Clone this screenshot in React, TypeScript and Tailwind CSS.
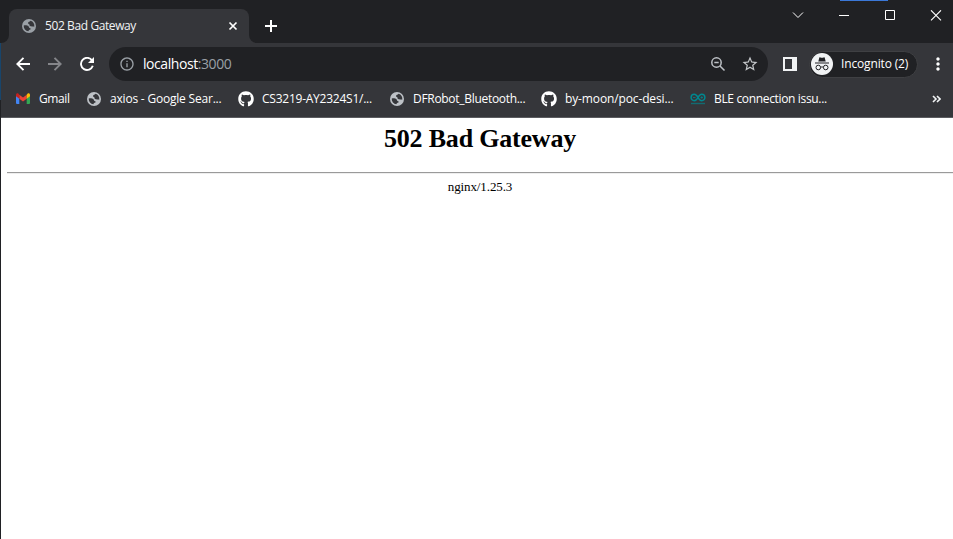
import React from "react";
import { MdInfoOutline, MdStarBorder, MdMoreVert } from "react-icons/md";
import { FaGithub } from "react-icons/fa";

const Globe = ({ className }: { className: string }) => (
  <svg viewBox="0 0 16 16" className={className}>
    <circle cx="8" cy="8" r="8" fill="currentColor" />
    <path d="M9.800 2.100C9.300 3.300 7.200 3 6.900 4.500c-.2 1 .9 1.100 1.400 1.600.5.600.1 1.500.8 2 1.200.8 3.800.1 4.900.7C14.600 5.600 12.800 3 9.800 2.100Z" fill="#35363a" />
    <path d="M2 7.400c1.800-.5 4.300-.2 5.400.8.700.6.500 1.600 1.300 2 .7.400 1.500.4 1.300 1.300-.3 1.200-2.300.6-2.700 2.400C4.200 13.700 1.800 10.900 2 7.400Z" fill="#35363a" />
  </svg>
);

const Gmail = () => (
  <svg viewBox="0 0 14 11" className="h-[11px] w-[14px] shrink-0">
    <path d="M0 2v8a1 1 0 0 0 1 1h2.300V4.500Z" fill="#4285f4" />
    <path d="M14 2v8a1 1 0 0 1-1 1h-2.300V4.500Z" fill="#34a853" />
    <path d="M3.300 1.700v4L7 8.500l3.700-2.800v-4L7 4.500Z" fill="#ea4335" />
    <path d="M0 2v1.300l3.300 2.400v-4L2.300.5C1.300-.2 0 .5 0 2Z" fill="#c5221f" />
    <path d="M14 2v1.300l-3.300 2.400v-4l1-1.200C12.700-.2 14 .5 14 2Z" fill="#fbbc04" />
  </svg>
);

const Arduino = () => (
  <svg viewBox="0 0 16 12" className="h-3 w-4 shrink-0" fill="none" stroke="#00878f">
    <path d="M8 4.500C6.900 2.400 5.700 1.300 4.300 1.300a3.200 3.200 0 0 0 0 6.400c1.400 0 2.600-1.100 3.700-3.200 1.100-2.100 2.300-3.200 3.700-3.200a3.200 3.200 0 0 1 0 6.400c-1.400 0-2.600-1.100-3.700-3.200Z" strokeWidth="1.500" />
    <path d="M3 4.500h2.500M10.500 4.500H13M11.750 3.250v2.500" strokeWidth=".8" />
    <path d="M1 10.500h14" strokeOpacity=".65" strokeWidth="1.400" />
  </svg>
);

const Incognito = () => (
  <svg viewBox="0 0 22 22" className="size-[22px] shrink-0">
    <circle cx="11" cy="11" r="11" fill="#f1f3f4" />
    <path d="m7.300 8.500 1-3.700c.2-.5.600-.6 1-.4 1.100.5 2.300.5 3.400 0 .4-.2.800-.1 1 .4l1 3.700ZM4 9.400h14v1.100H4Z" fill="#202124" />
    <g fill="none" stroke="#202124" strokeWidth="1">
      <circle cx="7.300" cy="14.500" r="2.300" />
      <circle cx="14.700" cy="14.500" r="2.300" />
      <path d="M9.600 14.300c.8-.5 2-.5 2.800 0" />
    </g>
  </svg>
);

function Bookmark({ icon, label, width, text }: { icon: React.ReactNode; label: string; width: string; text: string }) {
  return (
    <div className={`flex shrink-0 items-center ${width}`}>
      <span className="flex w-6 shrink-0 items-center">{icon}</span>
      <span className={`whitespace-nowrap text-xs leading-4 ${text}`}>{label}</span>
    </div>
  );
}

export default function App() {
  return (
    <div className="flex h-[539px] w-[953px] overflow-hidden bg-white font-['Open_Sans','Noto_Sans',sans-serif] text-white">
      <div className="flex w-px shrink-0 flex-col bg-[#202124] pt-[43px]">
        <div className="h-[57px] bg-[#18456b]" />
      </div>
      <div className="flex min-w-0 flex-1 flex-col">
        <header className="flex h-[43px] shrink-0 bg-[#202124]">
          <div className="flex w-2 shrink-0 items-end bg-[#35363a]">
            <div className="h-full w-full rounded-br-lg bg-[#202124]" />
          </div>
          <div className="flex w-60 shrink-0 pt-[9px]">
            <div className="flex flex-1 items-center rounded-t-lg bg-[#35363a] pl-[13px] pr-[11px]">
              <Globe className="size-[14px] text-[#9aa0a6]" />
              <span className="ml-[9px] flex-1 whitespace-nowrap text-xs tracking-[-0.4px] text-[#f1f3f4]">502 Bad Gateway</span>
              <svg viewBox="0 0 10 10" className="size-[10px]" stroke="currentColor" strokeWidth="1.700"><path d="m1.500 1.500 7 7m0-7-7 7" /></svg>
            </div>
          </div>
          <div className="flex flex-1 bg-[#35363a]">
            <div className="flex flex-1 justify-between rounded-bl-lg bg-[#202124]">
              <svg viewBox="0 0 12 12" className="ml-4 mt-5 size-3" stroke="#fff" strokeWidth="2"><path d="M6 0v12M0 6h12" /></svg>
              <div className="relative flex w-[161px] items-start pt-[10px]">
                <div className="absolute left-[48px] top-0 h-px w-12 bg-[#3b78d8]" />
                <svg viewBox="0 0 161 11" className="h-[11px] w-[161px]" fill="none" stroke="#fff">
                  <path d="m1 2.500 5 5 5-5" strokeWidth="1" />
                  <path d="M47 5.500h10" />
                  <path d="M93.500.5h9v9h-9z" />
                  <path d="m139 .3 10 10m0-10-10 10" strokeWidth="1.100" />
                </svg>
              </div>
            </div>
          </div>
        </header>

        <div className="flex h-[42px] shrink-0 items-center bg-[#35363a] pl-[15px]">
          <svg viewBox="0 0 14 14" className="size-[14px] shrink-0" fill="none" stroke="#fff" strokeWidth="1.900"><path d="M14 7H1.500M7.500.8 1.300 7l6.200 6.200" /></svg>
          <svg viewBox="0 0 14 14" className="ml-[18px] size-[14px] shrink-0" fill="none" stroke="#85868a" strokeWidth="1.900"><path d="M0 7h12.500M6.500.8 12.700 7l-6.200 6.200" /></svg>
          <svg viewBox="0 0 14 14" className="ml-[18px] size-[14px] shrink-0" fill="none" stroke="#fff" strokeWidth="1.900">
            <path d="M12 3.400A6.050 6.050 0 1 0 12.800 8.800" />
            <path d="M14 0v6H8Z" fill="#fff" stroke="none" />
          </svg>
          <div className="ml-[15px] flex h-[34px] w-[659px] shrink-0 items-center rounded-full bg-[#202124] pl-[10px] pr-[9px]">
            <MdInfoOutline className="size-4 shrink-0 text-[#9aa0a6]" />
            <span className="ml-2 flex-1 text-sm tracking-[-0.43px] text-white">localhost<span className="text-[#9aa0a6]">:3000</span></span>
            <svg viewBox="0 0 16 16" className="mr-[15px] size-4" fill="none" stroke="#bdc1c6" strokeWidth="1.500">
              <circle cx="6.500" cy="6.500" r="4.700" /><path d="m10 10 4.500 4.500M4.300 6.500h4.400" />
            </svg>
            <MdStarBorder className="size-[18px] text-[#c4c7ca]" />
          </div>
          <div className="ml-[15px] flex h-[14px] w-[14px] shrink-0 border-2 border-r-[5px] border-[#f1f3f4]" />
          <div className="ml-3 flex h-[27px] w-[109px] shrink-0 items-center rounded-full border border-[#3f4043] bg-[#202124] pl-px">
            <Incognito />
            <span className="ml-2 whitespace-nowrap text-xs tracking-[-0.15px]">Incognito (2)</span>
          </div>
          <MdMoreVert className="ml-[10px] size-[20px] shrink-0" />
        </div>

        <nav className="flex h-8 shrink-0 items-center bg-[#35363a] pb-[5px] pl-[15px]">
          <Bookmark icon={<Gmail />} label="Gmail" width="w-[71px] [&>span:first-child]:w-[23px]" text="tracking-[-0.4px]" />
          <Bookmark icon={<Globe className="size-[14px] text-[#bdc1c6]" />} label="axios - Google Sear..." width="w-[151px] [&>span:first-child]:w-[23px]" text="tracking-[-0.2px]" />
          <Bookmark icon={<FaGithub className="size-4 text-white" />} label="CS3219-AY2324S1/..." width="w-[152px]" text="tracking-[-0.24px]" />
          <Bookmark icon={<Globe className="size-[14px] text-[#bdc1c6]" />} label="DFRobot_Bluetooth..." width="w-[151px] [&>span:first-child]:w-[23px]" text="tracking-[-0.3px]" />
          <Bookmark icon={<FaGithub className="size-4 text-white" />} label="by-moon/poc-desi..." width="w-[149px]" text="tracking-[-0.13px]" />
          <Bookmark icon={<Arduino />} label="BLE connection issu..." width="w-[242px]" text="tracking-[-0.34px]" />
          <svg viewBox="0 0 9 8" className="h-2 w-[9px]" fill="none" stroke="#f1f3f4" strokeWidth="1.600"><path d="m1 1 3 3-3 3m4-6 3 3-3 3" /></svg>
        </nav>
        <div className="h-px shrink-0 bg-[#5b5c60]" />
        <main className="flex flex-1 flex-col bg-white pl-[6px] text-center font-['Liberation_Serif',serif] text-black">
          <h1 className="mt-[5px] text-[26px] font-bold leading-[31px] tracking-[-0.2px]">502 Bad Gateway</h1>
          <hr className="mt-[18px] h-[2px] border-0 border-b border-t border-b-[#eeeeee] border-t-[#9a9a9a]" />
          <p className="mt-[5px] text-[13px] leading-4 tracking-[-0.1px]">nginx/1.25.3</p>
        </main>
      </div>
    </div>
  );
}
